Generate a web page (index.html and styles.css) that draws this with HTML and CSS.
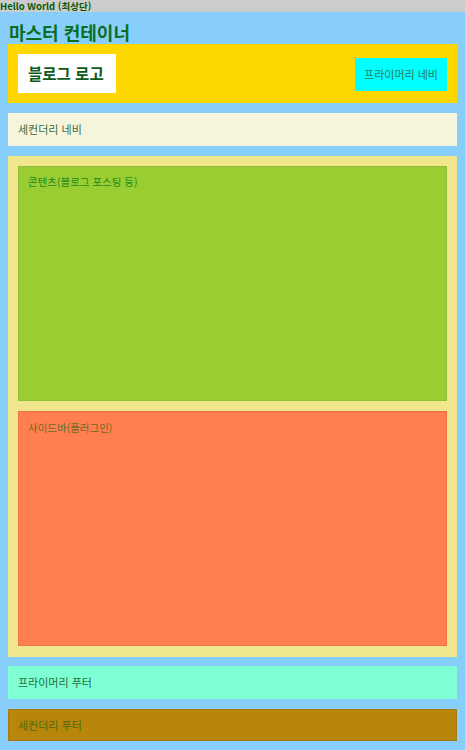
FILE: index.html
```html
<!DOCTYPE html>
<html lang="ko">
<head>
<meta charset="utf-8">
<title>Hello World</title>
<link rel="stylesheet" href="styles.css">
</head>
<body>
  <div class="topbar">Hello World (최상단)</div>
  <div class="master">
    <h1 class="master-title">마스터 컨테이너</h1>
    <header class="header">
      <div class="logo">블로그 로고</div>
      <nav class="primary-nav">프라이머리 네비</nav>
    </header>
    <nav class="secondary-nav">세컨더리 네비</nav>
    <main class="main">
      <section class="content">콘텐츠(블로그 포스팅 등)</section>
      <aside class="sidebar">사이드바(플러그인)</aside>
    </main>
    <footer class="primary-footer">프라이머리 푸터</footer>
    <footer class="secondary-footer">세컨더리 푸터</footer>
  </div>
</body>
</html>
```
FILE: styles.css
```css
html, body {
  margin: 0;
  padding: 0;
}
body {
  background: #87cefa;
  font-family: "Noto Sans CJK KR", "Noto Sans", sans-serif;
  color: #1f7a1f;
  width: 465px;
  height: 750px;
  overflow: hidden;
}
.topbar {
  background: #cccccc;
  height: 12px;
  line-height: 12px;
  font-size: 9.5px;
  font-weight: bold;
  color: #0b5a0b;
  white-space: nowrap;
}
.master {
  padding: 0 8px;
  display: flex;
  flex-direction: column;
}
.master-title {
  margin: 0;
  padding: 9px 0 0 1px;
  height: 23px;
  line-height: 23px;
  font-size: 18px;
  font-weight: bold;
  color: #0a6e1e;
}
.header {
  background: #ffd700;
  height: 59px;
  box-sizing: border-box;
  padding: 0 10px;
  display: flex;
  align-items: center;
  justify-content: space-between;
}
.logo {
  background: #ffffff;
  height: 39px;
  line-height: 39px;
  width: 98px;
  box-sizing: border-box;
  padding-left: 10px;
  font-size: 15.5px;
  font-weight: bold;
  color: #0d5a1a;
  white-space: nowrap;
}
.primary-nav {
  background: #00ffff;
  height: 33px;
  line-height: 33px;
  margin-top: 2px;
  width: 92px;
  box-sizing: border-box;
  text-align: center;
  font-size: 11px;
  color: #2a7a5a;
  white-space: nowrap;
}
.secondary-nav {
  background: #f5f5dc;
  margin-top: 10px;
  height: 33px;
  line-height: 33px;
  padding: 0 10px;
  font-size: 11px;
  color: #3d6a3d;
}
.main {
  background: #f0e68c;
  margin-top: 10px;
  padding: 10px 10px 11px;
  display: flex;
  flex-direction: column;
  gap: 10px;
}
.content, .sidebar {
  height: 235px;
  box-sizing: border-box;
  padding: 7px 9px;
  font-size: 10.5px;
  line-height: 15px;
}
.sidebar {
  padding-top: 8px;
}
.content {
  background: #9acd32;
  border: 1px solid #8fbf3a;
  color: #1f8a1f;
}
.sidebar {
  background: #ff7f50;
  border: 1px solid #eb7548;
  color: #6b6a1f;
}
.primary-footer {
  background: #7fffd4;
  margin-top: 9px;
  height: 33px;
  line-height: 33px;
  padding: 0 10px;
  font-size: 11px;
  color: #1e6e3e;
}
.secondary-footer {
  background: #b8860b;
  margin-top: 10px;
  height: 32px;
  line-height: 30px;
  box-sizing: border-box;
  border: 1px solid #a57a12;
  padding: 0 9px;
  font-size: 11px;
  color: #4f6a0f;
}
```
